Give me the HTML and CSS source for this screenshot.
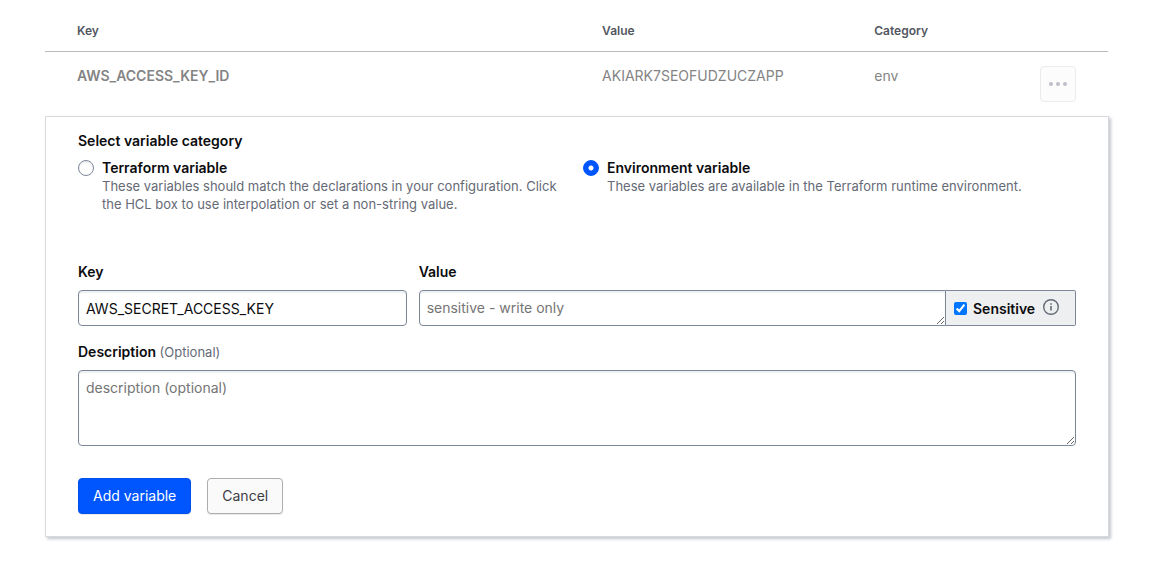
FILE: index.html
```html
<!DOCTYPE html>
<html lang="en">
<head>
<meta charset="utf-8">
<title>Variables</title>
<link rel="stylesheet" href="styles.css">
</head>
<body>
<main class="page">
  <table class="vars">
    <thead>
      <tr><th class="col-key">Key</th><th class="col-value">Value</th><th class="col-category">Category</th><th class="col-menu"></th></tr>
    </thead>
    <tbody>
      <tr>
        <td class="var-key">AWS_ACCESS_KEY_ID</td>
        <td>AKIARK7SEOFUDZUCZAPP</td>
        <td>env</td>
        <td class="menu-cell">
          <button class="menu-button" type="button" disabled aria-label="More actions">
            <svg width="18" height="4" viewBox="0 0 18 4" fill="currentColor"><circle cx="2" cy="2" r="2"/><circle cx="9" cy="2" r="2"/><circle cx="16" cy="2" r="2"/></svg>
          </button>
        </td>
      </tr>
    </tbody>
  </table>

  <form class="card">
    <fieldset class="category">
      <legend class="label">Select variable category</legend>
      <div class="options">
        <div class="option">
          <input class="radio" type="radio" name="category" id="cat-terraform">
          <div>
            <label class="label" for="cat-terraform">Terraform variable</label>
            <p class="help">These variables should match the declarations in your configuration. Click the HCL box to use interpolation or set a non-string value.</p>
          </div>
        </div>
        <div class="option">
          <input class="radio" type="radio" name="category" id="cat-env" checked>
          <div>
            <label class="label" for="cat-env">Environment variable</label>
            <p class="help">These variables are available in the Terraform runtime environment.</p>
          </div>
        </div>
      </div>
    </fieldset>

    <div class="fields">
      <div class="field">
        <label class="label" for="key">Key</label>
        <input class="control" type="text" id="key" value="AWS_SECRET_ACCESS_KEY">
      </div>
      <div class="field">
        <label class="label" for="value">Value</label>
        <div class="value-group">
          <textarea class="control value-input" id="value" rows="1" placeholder="sensitive - write only"></textarea>
          <div class="addon">
            <input class="check" type="checkbox" id="sensitive" checked>
            <label class="label sensitive-label" for="sensitive">Sensitive</label>
            <svg class="info" width="16" height="16" viewBox="0 0 16 16" fill="none" stroke="currentColor"><circle cx="8" cy="8" r="7.3" stroke-width="1.4"/><path d="M8 7v4.4" stroke-width="1.6"/><path d="M8 4.2v1.6" stroke-width="1.6"/></svg>
          </div>
        </div>
      </div>
    </div>

    <div class="field description-field">
      <label class="label" for="description">Description <span class="optional">(Optional)</span></label>
      <textarea class="control description" id="description" placeholder="description (optional)"></textarea>
    </div>

    <div class="actions">
      <button class="button primary" type="submit">Add variable</button>
      <button class="button" type="button">Cancel</button>
    </div>
  </form>
</main>
</body>
</html>
```
FILE: styles.css
```css
* { box-sizing: border-box; }
body {
  margin: 0;
  background: #fff;
  color: #0c0c0e;
  font: 14px/18px Inter, "Liberation Sans", sans-serif;
}
.page { padding: 10px 60px 40px 45px; }

.vars {
  width: 100%;
  table-layout: fixed;
  border-collapse: separate;
  border-spacing: 0;
  color: #848484;
}
.vars th {
  height: 42px;
  padding: 0 0 0 32px;
  border-bottom: 1px solid #b9bac0;
  color: #525761;
  font-size: 12px;
  font-weight: 600;
  text-align: left;
}
.vars td { height: 64px; padding: 15px 0 0 32px; vertical-align: top; }
.col-key { width: 49.4%; }
.col-value { width: 25.6%; }
.vars .var-key { font-weight: 600; }
.vars .menu-cell { padding: 14px 32px 0 0; }
.col-menu { width: 10%; }
.menu-button {
  display: flex;
  align-items: center;
  justify-content: center;
  width: 36px;
  height: 36px;
  margin-left: auto;
  padding: 0;
  border: 1px solid #ebebec;
  border-radius: 4px;
  background: #fcfcfc;
  color: #bfbfc9;
}

.card {
  margin-right: -1px;
  padding: 15px 32px 22px;
  border: 1px solid #d8dade;
  box-shadow: 2px 2px 3px #c4c6cf;
}
.label { font-size: 14px; font-weight: 600; color: #0c0c0e; }
.category { min-width: 0; margin: 0; padding: 0; border: 0; }
.category legend { display: block; padding: 0; }
.options {
  display: grid;
  grid-template-columns: 1fr 1fr;
  gap: 12px;
  padding-top: 9px;
}
.option { display: flex; gap: 8px; }
.radio {
  appearance: none;
  flex: none;
  width: 16px;
  height: 16px;
  margin: 1px 0;
  border: 1px solid #7c8797;
  border-radius: 50%;
  background: #fff;
  box-shadow: inset 0 1px 2px #e4e6ea;
}
.radio:checked {
  border-color: #0056fe;
  background: radial-gradient(circle, #fff 2px, #0056fe 3px);
  box-shadow: none;
}
.option .label { display: block; }
.help { margin: 0; color: #656a76; font-size: 13px; }

.fields {
  display: grid;
  grid-template-columns: 1fr 2fr;
  gap: 12px;
  margin-top: 50px;
}
.field { display: flex; flex-direction: column; gap: 9px; min-width: 0; }
.control {
  display: block;
  width: 100%;
  height: 36px;
  margin: 0;
  padding: 8px 7px;
  border: 1px solid #7c8797;
  border-radius: 4px;
  background: #fff;
  box-shadow: inset 0 2px 2px #eceef0;
  color: #0c0c0e;
  font: inherit;
}
.control::placeholder { color: #757575; opacity: 1; }
.value-group { display: flex; }
.value-input { flex: 1; min-width: 0; border-radius: 4px 0 0 4px; }
.addon {
  display: flex;
  align-items: center;
  gap: 6px;
  width: 130px;
  padding: 0 8px;
  border: 1px solid #7c8797;
  border-left: 0;
  border-radius: 0 2px 2px 0;
  background: #edeff1;
}
.check { width: 13px; height: 13px; margin: 0; accent-color: #0075ff; }
.sensitive-label { padding-top: 2px; }
.info { flex: none; margin: 0 0 2px 2px; color: #656a76; }
.description-field { margin-top: 17px; }
.optional { color: #656a76; font-size: 13px; font-weight: 400; }
.description { height: 76px; }

.actions { display: flex; gap: 16px; margin-top: 32px; }
.button {
  height: 36px;
  padding: 0 14px;
  border: 1px solid #aeaeae;
  border-radius: 4px;
  background: #fafafa;
  box-shadow: 0 1px 1px #e8e8ec;
  color: #3b3d45;
  font: inherit;
}
.primary { border-color: #0050ea; background: #0056fe; color: #fff; }
```
